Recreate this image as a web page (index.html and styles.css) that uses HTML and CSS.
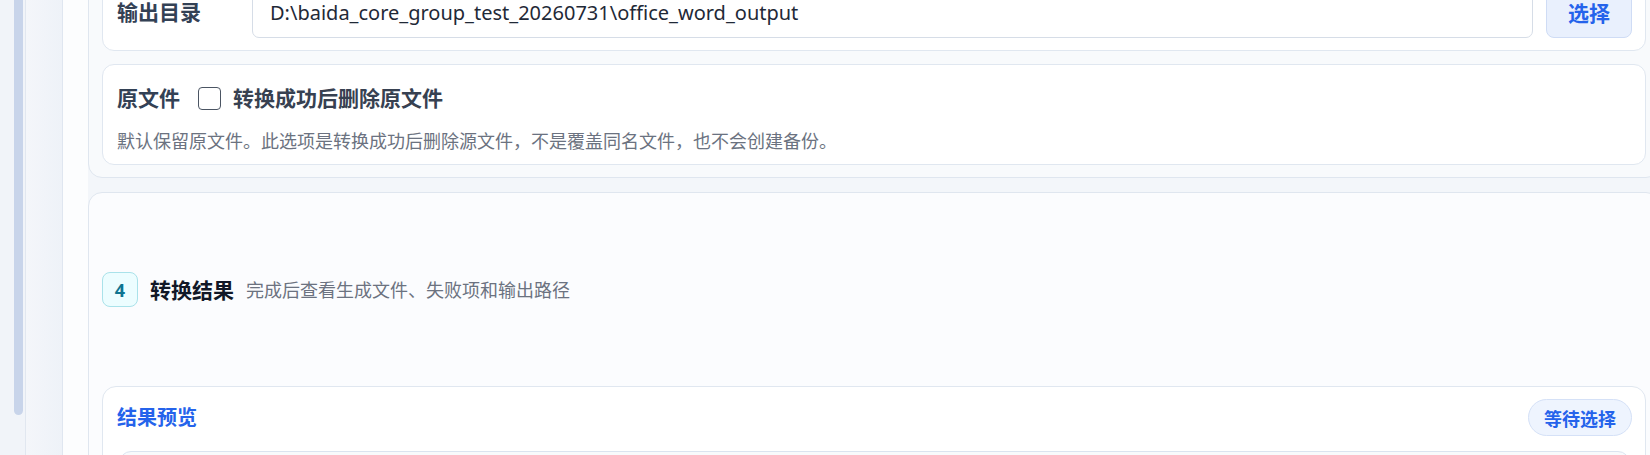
FILE: index.html
```html
<!DOCTYPE html>
<html lang="zh-CN">
<head>
<meta charset="utf-8">
<title>转换设置</title>
<link rel="stylesheet" href="styles.css">
</head>
<body>
<div class="app">
  <div class="rail"><div class="thumb"></div></div>
  <div class="side-edge"></div>
  <div class="gutter"></div>
  <main class="main">
    <section class="section section-opts">
      <div class="card row-card">
        <span class="field-label">输出目录</span>
        <div class="path-input">D:\baida_core_group_test_20260731\office_word_output</div>
        <button class="btn-soft">选择</button>
      </div>
      <div class="card orig-card">
        <div class="orig-row">
          <span class="field-label">原文件</span>
          <span class="checkbox"></span>
          <span class="check-label">转换成功后删除原文件</span>
        </div>
        <p class="hint">默认保留原文件。此选项是转换成功后删除源文件，不是覆盖同名文件，也不会创建备份。</p>
      </div>
    </section>
    <section class="section section-result">
      <div class="step-head">
        <span class="step-badge">4</span>
        <h2 class="step-title">转换结果</h2>
        <span class="step-sub">完成后查看生成文件、失败项和输出路径</span>
      </div>
      <div class="card preview-card">
        <div class="preview-head">
          <span class="preview-title">结果预览</span>
          <span class="pill">等待选择</span>
        </div>
        <div class="preview-box"></div>
      </div>
    </section>
  </main>
</div>
</body>
</html>
```

FILE: styles.css
```css
html, body {
  margin: 0;
  padding: 0;
  height: 455px;
  overflow: hidden;
  background: #f3f6fa;
  font-family: "Noto Sans", "Noto Sans CJK SC", sans-serif;
}

.app {
  display: flex;
  height: 455px;
  overflow: hidden;
}

.rail {
  width: 25px;
  flex-shrink: 0;
  padding-left: 14px;
  box-sizing: border-box;
  background: #f1f4f9;
}

.thumb {
  width: 9px;
  height: 435px;
  margin-top: -20px;
  background: #c8d4ea;
  border-radius: 0 0 5px 5px;
}

.side-edge {
  width: 38px;
  flex-shrink: 0;
  box-sizing: border-box;
  border-left: 1px solid #e1e7f0;
  border-right: 1px solid #dfe6f0;
  background: linear-gradient(90deg, #f4f6fa 0%, #eef2f8 100%);
}

.gutter {
  width: 25px;
  flex-shrink: 0;
  background: #fcfdfe;
}

.main {
  width: 1572px;
  flex-shrink: 0;
  margin-top: -41px;
  display: flex;
  flex-direction: column;
  gap: 14px;
}

.section {
  border: 1px solid #dfe6ef;
  border-radius: 14px;
  padding: 13px;
  box-sizing: border-box;
}

.section-opts {
  background: #f8fafc;
  display: flex;
  flex-direction: column;
  gap: 13px;
  padding-bottom: 12px;
}

.card {
  background: #ffffff;
  border: 1px solid #e0e7f0;
  border-radius: 12px;
}

.row-card {
  display: flex;
  align-items: center;
  padding: 12px 13px 12px 14px;
}

.field-label {
  font-size: 21px;
  font-weight: 700;
  color: #334155;
  line-height: 28px;
}

.row-card .field-label {
  width: 135px;
  flex-shrink: 0;
}

.path-input {
  flex: 1;
  height: 52px;
  box-sizing: border-box;
  border: 1px solid #d6dde7;
  border-radius: 7px;
  padding: 0 17px;
  display: flex;
  align-items: center;
  font-size: 20px;
  color: #1f2937;
  background: #ffffff;
}

.btn-soft {
  margin-left: 13px;
  width: 86px;
  height: 52px;
  border: 1px solid #cfdcf5;
  border-radius: 8px;
  background: #e9f0fd;
  color: #2563eb;
  font-family: "Noto Sans CJK SC", sans-serif;
  font-size: 21px;
  font-weight: 700;
  padding: 0;
}

.orig-card {
  padding: 18px 14px 11px;
}

.orig-row {
  display: flex;
  align-items: center;
  height: 30px;
}

.checkbox {
  width: 23px;
  height: 23px;
  box-sizing: border-box;
  border: 1.5px solid #4b5563;
  border-radius: 4px;
  margin-left: 18px;
  margin-right: 12px;
  background: #fff;
}

.check-label {
  font-size: 21px;
  font-weight: 700;
  color: #374151;
  line-height: 28px;
}

.hint {
  margin: 16px 0 0;
  font-size: 18px;
  line-height: 24px;
  color: #6b7280;
}

.section-result {
  background: #fbfcfe;
  padding: 0 13px;
  flex: 1;
}

.step-head {
  height: 193px;
  display: flex;
  align-items: center;
}

.step-badge {
  width: 36px;
  height: 35px;
  box-sizing: border-box;
  display: flex;
  align-items: center;
  justify-content: center;
  border: 1px solid #a9e2ea;
  border-radius: 8px;
  background: #ecfdff;
  color: #0e7490;
  font-size: 18px;
  font-weight: 700;
}

.step-title {
  margin: 0 0 0 12px;
  font-size: 21px;
  font-weight: 700;
  color: #111827;
  line-height: 28px;
}

.step-sub {
  margin-left: 12px;
  font-size: 18px;
  color: #6b7280;
  line-height: 24px;
}

.preview-card {
  border-radius: 14px;
  height: 200px;
}

.preview-head {
  display: flex;
  align-items: center;
  justify-content: space-between;
  padding: 12px 13px 15px 14px;
}

.preview-title {
  font-size: 20px;
  font-weight: 700;
  color: #2563eb;
  line-height: 28px;
}

.pill {
  width: 104px;
  height: 37px;
  box-sizing: border-box;
  display: flex;
  align-items: center;
  justify-content: center;
  border: 1px solid #d5e1f7;
  border-radius: 19px;
  background: #eef4fe;
  color: #2563eb;
  font-size: 18px;
  font-weight: 700;
}

.preview-box {
  margin: 0 15px 0 16px;
  height: 120px;
  border: 1px solid #dbe4f0;
  border-radius: 12px;
  background: #f8fafc;
}
```
